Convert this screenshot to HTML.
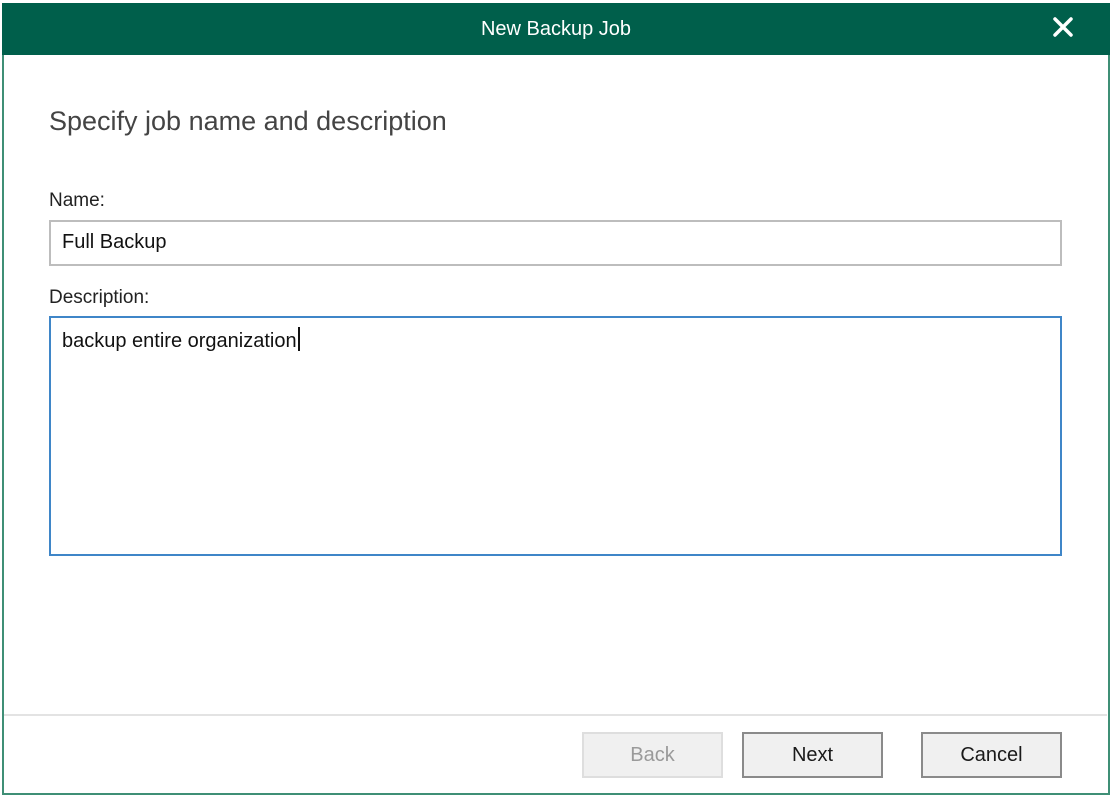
<!DOCTYPE html>
<html><head><meta charset="utf-8"><style>
body{margin:0;width:1111px;height:797px;background:#fff;position:relative;overflow:hidden;font-family:"Liberation Sans",sans-serif;}
.win{position:absolute;left:2px;top:3px;width:1104px;height:790px;border:2px solid #3f8f76;border-top:none;box-sizing:content-box;}
.hdr{position:absolute;left:2px;top:3px;width:1108px;height:52px;background:#005f4b;color:#fff;font-size:20px;text-align:center;line-height:52px;}
.x{position:absolute;left:1052px;top:16px;}
.t{position:absolute;color:#333;}
.box{position:absolute;box-sizing:border-box;background:#fff;}
.btn{position:absolute;top:732px;width:141px;height:46px;box-sizing:border-box;border:2px solid #8a8a8a;background:#f0f0f0;font-size:20px;text-align:center;line-height:42px;color:#1a1a1a;}
</style></head><body>
<div class="win"></div>
<div class="hdr">New Backup Job</div>
<svg class="x" width="22" height="22" viewBox="0 0 22 22"><path d="M3 3L19 19M19 3L3 19" stroke="#fff" stroke-width="3.5" stroke-linecap="round"/></svg>
<div class="t" style="left:49px;top:106px;font-size:27px;color:#444;">Specify job name and description</div>
<div class="t" style="left:49px;top:190px;font-size:19px;color:#222;">Name:</div>
<div class="box" style="left:49px;top:220px;width:1013px;height:46px;border:2px solid #bdbdbd;"></div>
<div class="t" style="left:62px;top:231px;font-size:20px;color:#111;">Full Backup</div>
<div class="t" style="left:49px;top:287px;font-size:19px;color:#222;">Description:</div>
<div class="box" style="left:49px;top:316px;width:1013px;height:240px;border:2px solid #3f86c8;"></div>
<div class="t" style="left:62px;top:327px;font-size:20px;color:#111;">backup entire organization<span style="display:inline-block;width:2px;height:24px;background:#111;vertical-align:-4px;margin-left:1px"></span></div>
<div style="position:absolute;left:4px;top:714px;width:1103px;height:2px;background:#e3e3e3;"></div>
<div class="btn" style="left:582px;border-color:#dedede;color:#9a9a9a;">Back</div>
<div class="btn" style="left:742px;">Next</div>
<div class="btn" style="left:921px;">Cancel</div>
</body></html>
